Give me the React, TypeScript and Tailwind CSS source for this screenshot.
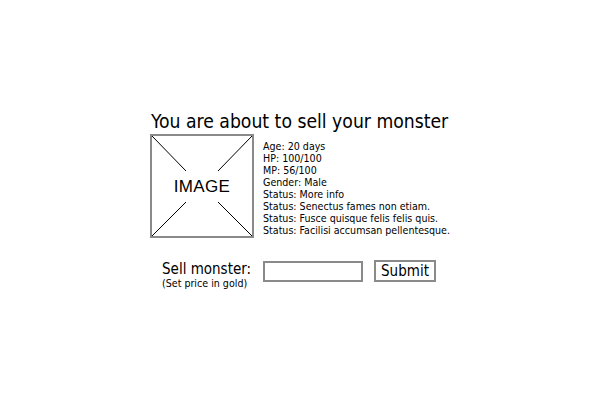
import React from "react";

const font = { fontFamily: '"DejaVu Sans Condensed", "DejaVu Sans", Verdana, sans-serif' };

function ImagePlaceholder() {
  return (
    <div className="relative w-[104px] h-[104px] border-2 border-[#8a8a8a] bg-white shrink-0">
      <svg className="absolute inset-0" width="100" height="100" viewBox="0 0 100 100">
        <line x1="0" y1="0" x2="34" y2="35" stroke="#000" strokeWidth="1" />
        <line x1="100" y1="0" x2="66" y2="35" stroke="#000" strokeWidth="1" />
        <line x1="0" y1="100" x2="34" y2="66" stroke="#000" strokeWidth="1" />
        <line x1="100" y1="100" x2="66" y2="66" stroke="#000" strokeWidth="1" />
      </svg>
      <div className="absolute inset-0 flex items-center justify-center">
        <span className="text-[17px] leading-none text-black" style={{ fontFamily: '"Liberation Sans", sans-serif', letterSpacing: "0.3px" }}>
          IMAGE
        </span>
      </div>
    </div>
  );
}

export default function App() {
  const stats = [
    "Age: 20 days",
    "HP: 100/100",
    "MP: 56/100",
    "Gender: Male",
    "Status: More info",
    "Status: Senectus fames non etiam.",
    "Status: Fusce quisque felis felis quis.",
    "Status: Facilisi accumsan pellentesque.",
  ];
  return (
    <div className="w-[600px] h-[400px] bg-white text-black" style={font}>
      <div className="w-[300px] ml-[150px] pt-[110px]">
        <h1 className="text-[19.2px] leading-[24px] font-normal ml-[1px] whitespace-nowrap">You are about to sell your monster</h1>
        <div className="flex">
          <ImagePlaceholder />
          <div className="ml-[9px] pt-[6px] text-[10.6px] leading-[12px] whitespace-nowrap">
            {stats.map((s) => (
              <div key={s}>{s}</div>
            ))}
          </div>
        </div>
        <div className="flex items-start mt-[23px] ml-[12px]">
          <div className="w-[101px]">
            <div className="text-[15px] leading-[16px]">Sell monster:</div>
            <div className="text-[10.6px] leading-[12px]">(Set price in gold)</div>
          </div>
          <input className="w-[100px] h-[21px] border-2 border-[#8a8a8a] outline-none" />
          <button className="ml-[11px] h-[22px] w-[62px] border-2 border-[#8a8a8a] bg-white text-[15px] leading-[18px] -mt-[1px]">
            Submit
          </button>
        </div>
      </div>
    </div>
  );
}
